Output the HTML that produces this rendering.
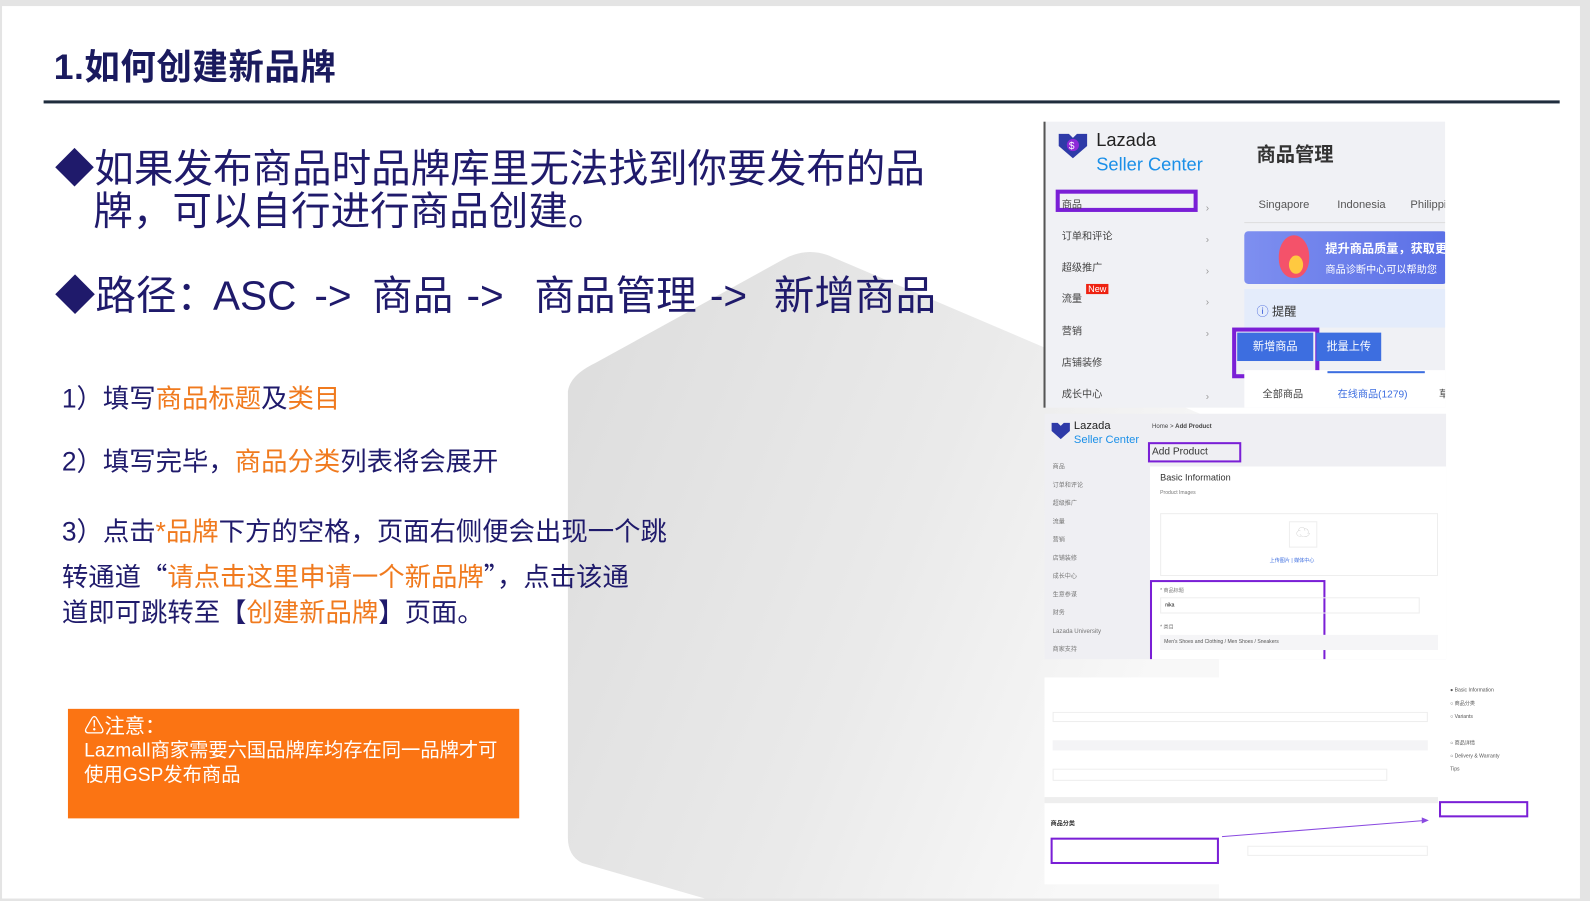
<!DOCTYPE html>
<html><head><meta charset="utf-8"><style>
*{margin:0;padding:0;box-sizing:border-box}
body{width:1590px;height:900px;background:#e4e4e4;position:relative;overflow:hidden;font-family:"Liberation Sans","Noto Sans CJK SC",sans-serif}
.wrap{position:absolute;left:0;top:0;width:1568px;height:888px;transform:scale(1.0141);transform-origin:0 0}
.slide{position:absolute;left:2px;top:6px;width:1556px;height:880px;background:#fff;overflow:hidden}
.a{position:absolute;white-space:nowrap}
.n{color:#1f1a6b}
.o{color:#f07a1e}
.q{font-family:"Noto Sans CJK SC",sans-serif}
.sb{font-size:10px;color:#444}
.tiny{font-size:5px;color:#777}
</style></head><body>
<div class="wrap"><div class="slide">
<svg class="a" style="left:0;top:0" width="1566" height="882">
<defs><linearGradient id="g" x1="0" y1="0" x2="1" y2="0.4"><stop offset="0" stop-color="#dcdcdc"/><stop offset="0.6" stop-color="#eaeaea"/><stop offset="1" stop-color="#f8f8f8"/></linearGradient></defs>
<path d="M585 352 L770 250 Q795 236 820 248 L1200 410 L1200 882 L700 882 L572 845 Q558 838 558 820 L558 380 Q560 364 585 352 Z" fill="url(#g)"/>
</svg>
<div class="a n" style="left:51px;top:32px;font-size:35px;font-weight:bold;color:#1a1a5e;letter-spacing:0.5px">1.如何创建新品牌</div>
<div class="a" style="left:41px;top:93px;width:1495px;height:3px;background:#1f2d3d"></div>
<div class="a n" style="left:52px;top:141px;font-size:39px;line-height:42px">◆如果发布商品时品牌库里无法找到你要发布的品<br><span style="padding-left:38px">牌，可以自行进行商品创建。</span></div>
<div class="a n" style="left:52px;top:262px;font-size:40px;line-height:48px">◆路径：</div>
<div class="a n" style="left:208px;top:262px;font-size:40px;line-height:48px">ASC</div>
<div class="a n" style="left:308px;top:262px;font-size:40px;line-height:48px">-&gt;</div>
<div class="a n" style="left:365px;top:262px;font-size:40px;line-height:48px">商品</div>
<div class="a n" style="left:458px;top:262px;font-size:40px;line-height:48px">-&gt;</div>
<div class="a n" style="left:525px;top:262px;font-size:40px;line-height:48px">商品管理</div>
<div class="a n" style="left:698px;top:262px;font-size:40px;line-height:48px">-&gt;</div>
<div class="a n" style="left:761px;top:262px;font-size:40px;line-height:48px">新增商品</div>
<div class="a n" style="left:59px;top:367px;font-size:26px">1）填写<span class="o">商品标题</span>及<span class="o">类目</span></div>
<div class="a n" style="left:59px;top:429px;font-size:26px">2）填写完毕，<span class="o">商品分类</span>列表将会展开</div>
<div class="a n" style="left:59px;top:498px;font-size:26px">3）点击<span class="o">*品牌</span>下方的空格，页面右侧便会出现一个跳</div>
<div class="a n" style="left:59px;top:543px;font-size:26px">转通道<span class="q">“</span><span class="o">请点击这里申请一个新品牌</span><span class="q">”</span>，点击该通</div>
<div class="a n" style="left:59px;top:578px;font-size:26px">道即可跳转至【<span class="o">创建新品牌</span>】页面。</div>
<div class="a" style="left:65px;top:693px;width:445px;height:108px;background:#fb7413;color:#fff;font-size:19px;line-height:24px;padding:6px 0 0 16px">
<div style="font-size:20px">⚠注意：</div>Lazmall商家需要六国品牌库均存在同一品牌才可<br>使用GSP发布商品</div>

<!-- panel 1 -->
<div class="a" style="left:1027px;top:114px;width:396px;height:282px;background:#f0f1f5;border-left:2px solid #555;overflow:hidden">
 <svg class="a" style="left:10px;top:8px" width="34" height="30"><path d="M3 4 L13 4 L17 8 L21 4 L31 4 L31 16 L17 28 L3 16 Z" fill="#2e3aa8"/><circle cx="17" cy="15" r="6" fill="#8e2ad8"/><text x="13" y="19" font-size="10" fill="#fff" font-family="Liberation Sans">$</text></svg>
 <div class="a" style="left:50px;top:8px;font-size:18px;color:#222">Lazada</div>
 <div class="a" style="left:50px;top:32px;font-size:18px;color:#1a8fe8">Seller Center</div>
 <div class="a" style="left:208px;top:18px;font-size:19px;color:#333;font-weight:bold">商品管理</div>
 <div class="a" style="left:10px;top:67px;width:140px;height:22px;border:4px solid #7a1fd6"></div>
 <div class="a sb" style="left:16px;top:73px">商品</div>
 <div class="a sb" style="left:16px;top:104px">订单和评论</div>
 <div class="a sb" style="left:16px;top:135px">超级推广</div>
 <div class="a sb" style="left:16px;top:166px">流量</div>
 <div class="a" style="left:40px;top:160px;background:#e21;color:#fff;font-size:9px;padding:0 2px">New</div>
 <div class="a sb" style="left:16px;top:198px">营销</div>
 <div class="a sb" style="left:16px;top:229px">店铺装修</div>
 <div class="a sb" style="left:16px;top:260px">成长中心</div>
 <div class="a" style="left:158px;top:70px;font-size:10px;color:#999;line-height:31px">›<br>›<br>›<br>›<br>›<br><br>›</div>
 <div class="a" style="left:210px;top:76px;font-size:11px;color:#555">Singapore&nbsp;&nbsp;&nbsp;&nbsp;&nbsp;&nbsp;&nbsp;&nbsp;&nbsp;Indonesia&nbsp;&nbsp;&nbsp;&nbsp;&nbsp;&nbsp;&nbsp;&nbsp;Philippines</div>
 <div class="a" style="left:196px;top:99px;width:200px;height:1px;background:#ddd"></div>
 <div class="a" style="left:196px;top:108px;width:200px;height:52px;background:linear-gradient(90deg,#7e8ff0,#5a6fe6);border-radius:4px"></div>
 <div class="a" style="left:230px;top:112px;width:30px;height:42px;border-radius:50% 50% 45% 45%;background:#f4526a"></div>
 <div class="a" style="left:240px;top:132px;width:14px;height:18px;border-radius:50%;background:#ffc940"></div>
 <div class="a" style="left:276px;top:116px;font-size:12px;color:#fff;font-weight:bold">提升商品质量，获取更</div>
 <div class="a" style="left:276px;top:137px;font-size:10px;color:#fff">商品诊断中心可以帮助您</div>
 <div class="a" style="left:196px;top:165px;width:200px;height:38px;background:#e4ecfb"></div>
 <div class="a" style="left:208px;top:178px;font-size:12px;color:#333"><span style="color:#3a5bd9">ⓘ</span> 提醒</div>
 <div class="a" style="left:184px;top:203px;width:86px;height:50px;border:4px solid #7a1fd6"></div>
 <div class="a" style="left:189px;top:208px;width:75px;height:28px;background:#3d6ee0;color:#fff;font-size:11px;line-height:28px;text-align:center">新增商品</div>
 <div class="a" style="left:267px;top:208px;width:64px;height:28px;background:#3d6ee0;color:#fff;font-size:11px;line-height:28px;text-align:center">批量上传</div>
 <div class="a" style="left:196px;top:245px;width:200px;height:40px;background:#fff"></div>
 <div class="a" style="left:278px;top:246px;width:96px;height:2px;background:#3d6ee0"></div>
 <div class="a" style="left:214px;top:260px;font-size:10px;color:#444">全部商品</div>
 <div class="a" style="left:288px;top:260px;font-size:10px;color:#3d6ee0">在线商品(1279)</div>
 <div class="a" style="left:388px;top:260px;font-size:10px;color:#444">草</div>
</div>

<!-- panel 2 -->
<div class="a" style="left:1028px;top:402px;width:396px;height:242px;background:#efeff3;overflow:hidden">
 <svg class="a" style="left:5px;top:6px" width="22" height="20"><path d="M2 3 L8 3 L11 6 L14 3 L20 3 L20 11 L11 19 L2 11 Z" fill="#2e3aa8"/></svg>
 <div class="a" style="left:29px;top:6px;font-size:11px;color:#222">Lazada</div>
 <div class="a" style="left:29px;top:20px;font-size:11px;color:#1a8fe8">Seller Center</div>
 <div class="a tiny" style="left:8px;top:44px;line-height:18px;font-size:6px">商品<br>订单和评论<br>超级推广<br>流量<br>营销<br>店铺装修<br>成长中心<br>生意参谋<br>财务<br>Lazada University<br>商家支持</div>
 <div class="a" style="left:106px;top:10px;font-size:6px;color:#444">Home &gt; <b>Add Product</b></div>
 <div class="a" style="left:102px;top:28px;width:92px;height:20px;border:2px solid #7a1fd6;font-size:10px;color:#333;padding-left:2px;line-height:16px">Add Product</div>
 <div class="a" style="left:104px;top:52px;width:292px;height:190px;background:#fff"></div>
 <div class="a" style="left:114px;top:58px;font-size:9px;color:#333">Basic Information</div>
 <div class="a tiny" style="left:114px;top:75px">Product Images</div>
 <div class="a" style="left:114px;top:98px;width:274px;height:62px;border:1px solid #eee"></div>
 <div class="a" style="left:241px;top:106px;width:28px;height:26px;border:1px solid #eee;color:#ccc;font-size:14px;text-align:center">☁</div>
 <div class="a" style="left:222px;top:141px;font-size:5px;color:#3d6ee0">上传图片 | 媒体中心</div>
 <div class="a" style="left:104px;top:164px;width:173px;height:82px;border:2px solid #7a1fd6"></div>
 <div class="a tiny" style="left:114px;top:171px">* 商品标题</div>
 <div class="a" style="left:114px;top:181px;width:256px;height:16px;border:1px solid #eee;font-size:5px;padding:4px">nika</div>
 <div class="a tiny" style="left:114px;top:207px">* 类目</div>
 <div class="a" style="left:114px;top:218px;width:274px;height:15px;background:#f5f5f7;font-size:5px;padding:4px;color:#555">Men's Shoes and Clothing / Men Shoes / Sneakers</div>
</div>

<!-- panel 3 -->
<div class="a" style="left:1028px;top:662px;width:388px;height:204px;background:#fff;overflow:hidden">
 <div class="a" style="left:0;top:0;width:388px;height:124px;background:#fff;border-bottom:6px solid #eee"></div>
 <div class="a" style="left:8px;top:34px;width:370px;height:10px;border:1px solid #eee"></div>
 <div class="a" style="left:8px;top:62px;width:370px;height:10px;background:#f4f4f6"></div>
 <div class="a" style="left:8px;top:90px;width:330px;height:12px;border:1px solid #eee"></div>
 <div class="a" style="left:6px;top:139px;font-size:6px;color:#333;font-weight:bold">商品分类</div>
 <div class="a" style="left:6px;top:158px;width:166px;height:26px;border:2px solid #7a1fd6"></div>
 <div class="a" style="left:200px;top:166px;width:178px;height:10px;border:1px solid #eee"></div>
 <svg class="a" style="left:0;top:0" width="388" height="204"><path d="M175 157 L376 141" stroke="#8a4ae0" stroke-width="1"/><path d="M372 138 L379 141 L372 144Z" fill="#8a4ae0"/></svg>
</div>
<div class="a" style="left:1418px;top:662px;width:98px;height:142px;background:#fff"></div>
<div class="a" style="left:1417px;top:784px;width:88px;height:16px;border:2px solid #7a1fd6"></div>
<div class="a" style="left:1428px;top:669px;font-size:5px;color:#555;line-height:13px">● Basic Information<br>○ 商品分类<br>○ Variants<br><br>○ 商品详情<br>○ Delivery &amp; Warranty<br>Tips</div>
</div></div>
</body></html>
